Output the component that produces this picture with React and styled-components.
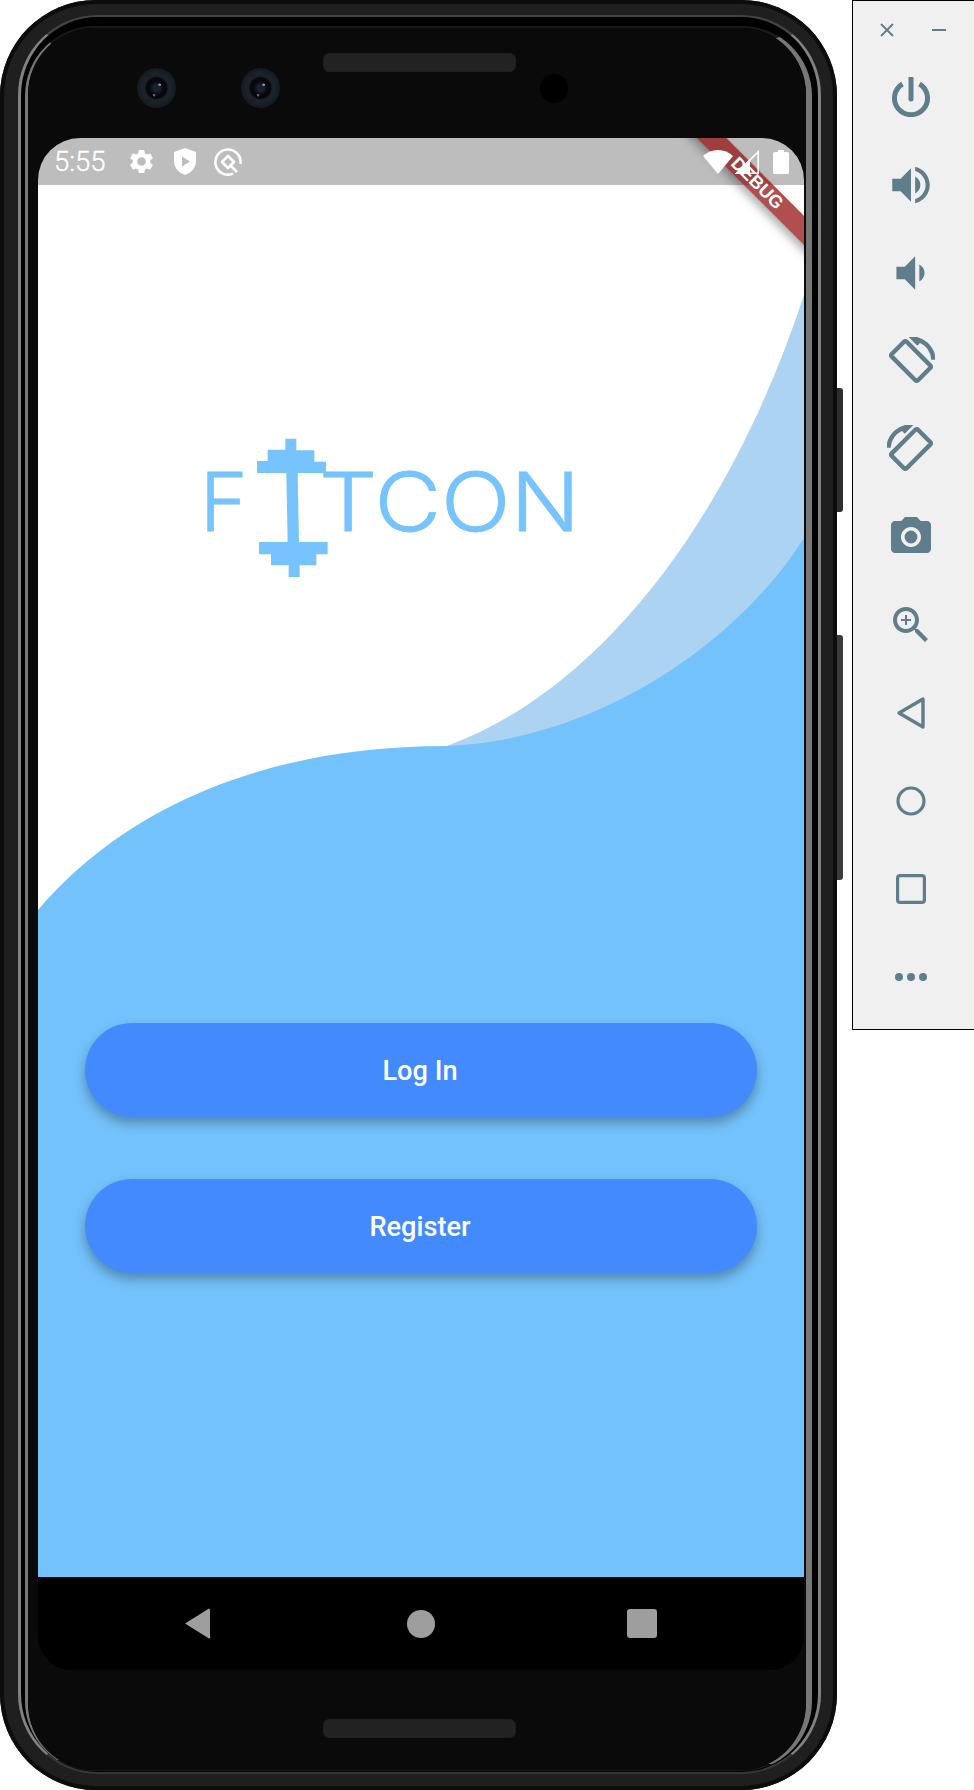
import styled, { createGlobalStyle } from "styled-components";

const GlobalStyle = createGlobalStyle`
  * { box-sizing: border-box; }
  html, body { margin: 0; padding: 0; background: #fff; }
  body { font-family: "Roboto", "Liberation Sans", sans-serif; overflow: hidden; }
`;

const TOOL_COLOR = "#607d8b";

export default function App() {
  return (
    <Page>
      <GlobalStyle />
      <Shell>
        <OuterRing>
          <InnerRing>
            <Bezel>
              <TopFixtures>
                <Speaker $top={25} />
                <CameraRow>
                  <Lens />
                  <Lens />
                  <Sensor />
                </CameraRow>
              </TopFixtures>
              <Screen>
                <StatusBar>
                  <Time>5:55</Time>
                  <GearIcon />
                  <ShieldIcon />
                  <QIcon />
                  <StatusRight>
                    <WifiIcon />
                    <SignalIcon />
                    <BatteryIcon />
                  </StatusRight>
                </StatusBar>
                <Content>
                  <WaveArt viewBox="0 0 766 1392" preserveAspectRatio="none">
                    <path d="M409 561 C562 505 692 335 766 110 V561 Z" fill="#add3f3" />
                    <path d="M0 725 C72 640 202 561 409 561 C562 555 702 455 766 353 V1392 H0 Z" fill="#74c2fb" />
                  </WaveArt>
                  <Logo>
                    <LogoLetter>F</LogoLetter>
                    <Barbell />
                    <LogoWord>TCON</LogoWord>
                  </Logo>
                  <Buttons>
                    <PillButton>Log In</PillButton>
                    <PillButton>Register</PillButton>
                  </Buttons>
                </Content>
                <NavBar>
                  <svg width="28" height="31" viewBox="0 0 28 31">
                    <path d="M26 1.5 V29.5 L27 30 L25 30.5 L1 15.5 L25 .5 Z" fill="#9e9e9e" />
                  </svg>
                  <NavCircle />
                  <NavSquare />
                </NavBar>
                <DebugBanner>DEBUG</DebugBanner>
              </Screen>
              <BottomFixtures>
                <Speaker />
              </BottomFixtures>
            </Bezel>
          </InnerRing>
        </OuterRing>
      </Shell>
      <SideKeys>
        <SideKey $height={124} $top={388} $tone="#2e2e2e" />
        <SideKey $height={245} $top={123} $tone="#3a3a3a" />
      </SideKeys>
      <Toolbar>
        <WindowRow>
          <svg width="16" height="16" viewBox="0 0 16 16">
            <path d="M2 2 L14 14 M14 2 L2 14" stroke={TOOL_COLOR} strokeWidth="1.8" />
          </svg>
          <MinusBar />
        </WindowRow>
        <ToolCell>
          <svg width="40" height="40" viewBox="0 0 40 40" fill="none" stroke={TOOL_COLOR}>
            <path d="M11.5 7 A16.5 16.5 0 1 0 28.5 7" strokeWidth="5" />
            <path d="M20 1 V22" strokeWidth="5" strokeLinecap="round" />
          </svg>
        </ToolCell>
        <ToolCell>
          <MaterialIcon size={50} d="M3 9v6h4l5 5V4L7 9H3zm13.5 3c0-1.77-1.02-3.29-2.5-4.03v8.05c1.48-.73 2.5-2.25 2.5-4.02zM14 3.23v2.06c2.89.86 5 3.54 5 6.71s-2.11 5.85-5 6.71v2.06c4.01-.91 7-4.49 7-8.77s-2.99-7.86-7-8.77z" />
        </ToolCell>
        <ToolCell>
          <MaterialIcon size={50} d="M18.5 12c0-1.77-1.02-3.29-2.5-4.03v8.05c1.48-.73 2.5-2.25 2.5-4.02zM5 9v6h4l5 5V4L9 9H5z" />
        </ToolCell>
        <ToolCell>
          <MaterialIcon size={48} d={ROTATE_PATH} bold />
        </ToolCell>
        <ToolCell>
          <Mirrored>
            <MaterialIcon size={48} d={ROTATE_PATH} bold />
          </Mirrored>
        </ToolCell>
        <ToolCell>
          <MaterialIcon size={48} d="M9 2L7.17 4H4c-1.1 0-2 .9-2 2v12c0 1.1.9 2 2 2h16c1.1 0 2-.9 2-2V6c0-1.1-.9-2-2-2h-3.17L15 2H9zm3 15c-2.76 0-5-2.24-5-5s2.24-5 5-5 5 2.24 5 5-2.24 5-5 5zM12 15.2a3.2 3.2 0 1 0 0-6.4 3.2 3.2 0 0 0 0 6.4z" />
        </ToolCell>
        <ToolCell>
          <MaterialIcon size={48} d="M15.5 14h-.79l-.28-.27C15.41 12.59 16 11.11 16 9.5 16 5.91 13.09 3 9.5 3S3 5.91 3 9.5 5.91 16 9.5 16c1.61 0 3.09-.59 4.23-1.57l.27.28v.79l5 4.99L20.49 19l-4.99-5zm-6 0C7.01 14 5 11.99 5 9.5S7.01 5 9.5 5 14 7.01 14 9.5 11.99 14 9.5 14zM12 10h-2v2H9v-2H7V9h2V7h1v2h2v1z" />
        </ToolCell>
        <ToolCell>
          <svg width="30" height="34" viewBox="0 0 30 34" fill="none">
            <path d="M27 3 V31 L3 17 Z" stroke={TOOL_COLOR} strokeWidth="3.4" strokeLinejoin="round" />
          </svg>
        </ToolCell>
        <ToolCell>
          <svg width="30" height="30" viewBox="0 0 30 30" fill="none">
            <circle cx="15" cy="15" r="13" stroke={TOOL_COLOR} strokeWidth="3.2" />
          </svg>
        </ToolCell>
        <ToolCell>
          <svg width="30" height="30" viewBox="0 0 30 30" fill="none">
            <rect x="1.6" y="1.6" width="26.8" height="26.8" rx="2.5" stroke={TOOL_COLOR} strokeWidth="3.2" />
          </svg>
        </ToolCell>
        <ToolCell>
          <svg width="34" height="10" viewBox="0 0 34 10" fill={TOOL_COLOR}>
            <circle cx="5" cy="5" r="4" />
            <circle cx="17" cy="5" r="4" />
            <circle cx="29" cy="5" r="4" />
          </svg>
        </ToolCell>
      </Toolbar>
    </Page>
  );
}

const ROTATE_PATH =
  "M16.48 2.52c3.27 1.55 5.61 4.72 5.97 8.48h1.5C23.44 4.84 18.29 0 12 0l-.66.03 3.81 3.81 1.33-1.32zm-6.25-.77c-.59-.59-1.54-.59-2.12 0L1.75 8.11c-.59.59-.59 1.54 0 2.12l12.02 12.02c.59.59 1.54.59 2.12 0l6.36-6.36c.59-.59.59-1.54 0-2.12L10.23 1.75zm4.6 19.44L2.81 9.17l6.36-6.36 12.02 12.02-6.36 6.36z";

function MaterialIcon({ d, size, bold }) {
  return (
    <svg width={size} height={size} viewBox="0 0 24 24" fill={TOOL_COLOR} stroke={bold ? TOOL_COLOR : "none"} strokeWidth={bold ? 0.7 : 0}>
      <path d={d} />
    </svg>
  );
}

function GearIcon() {
  return (
    <GearSvg width="29" height="29" viewBox="0 0 24 24" fill="#fff">
      <path d="M19.14 12.94c.04-.3.06-.61.06-.94 0-.32-.02-.64-.07-.94l2.03-1.58c.18-.14.23-.41.12-.61l-1.92-3.32c-.12-.22-.37-.29-.59-.22l-2.39.96c-.5-.38-1.03-.7-1.62-.94l-.36-2.54c-.04-.24-.24-.41-.48-.41h-3.84c-.24 0-.43.17-.47.41l-.36 2.54c-.59.24-1.13.57-1.62.94l-2.39-.96c-.22-.08-.47 0-.59.22L2.74 8.87c-.12.21-.08.47.12.61l2.03 1.58c-.05.3-.09.63-.09.94s.02.64.07.94l-2.03 1.58c-.18.14-.23.41-.12.61l1.92 3.32c.12.22.37.29.59.22l2.39-.96c.5.38 1.03.7 1.62.94l.36 2.54c.05.24.24.41.48.41h3.84c.24 0 .44-.17.47-.41l.36-2.54c.59-.24 1.13-.56 1.62-.94l2.39.96c.22.08.47 0 .59-.22l1.92-3.32c.12-.22.07-.47-.12-.61l-2.01-1.58zM12 15.6c-1.98 0-3.6-1.62-3.6-3.6s1.62-3.6 3.6-3.6 3.6 1.62 3.6 3.6-1.62 3.6-3.6 3.6z" />
    </GearSvg>
  );
}

function ShieldIcon() {
  return (
    <ShieldSvg width="22" height="27" viewBox="0 0 22 27" fill="#fff">
      <path fillRule="evenodd" d="M11 0 L22 4 V13 C22 20 17 25 11 27 C5 25 0 20 0 13 V4 Z M8 8.5 V18.5 L16 13.5 Z" />
    </ShieldSvg>
  );
}

function QIcon() {
  return (
    <QSvg width="28" height="28" viewBox="0 0 28 28" fill="none" stroke="#fff" strokeWidth="2.6">
      <path d="M19 25.6 A12.6 12.6 0 1 1 26.4 16" />
      <path d="M14 8 L20 14 L14 20 L8 14 Z" strokeLinejoin="round" />
      <path d="M16 17 L23 24" />
    </QSvg>
  );
}

function WifiIcon() {
  return (
    <svg width="30" height="24" viewBox="0 0 30 24" fill="#fff">
      <path d="M0 6 C8 -2 22 -2 30 6 L15 24 Z" />
    </svg>
  );
}

function SignalIcon() {
  return (
    <svg width="24" height="24" viewBox="0 0 24 24" fill="none">
      <path d="M23.2 1.8 V23.2 H1.8 Z" stroke="#fff" strokeWidth="1.6" />
      <path d="M15 9 V24 H0 Z" fill="#fff" />
    </svg>
  );
}

function BatteryIcon() {
  return (
    <svg width="16" height="24" viewBox="0 0 16 24" fill="#fff">
      <path d="M5 0 H11 V2 H14.5 A1.5 1.5 0 0 1 16 3.5 V22.5 A1.5 1.5 0 0 1 14.5 24 H1.5 A1.5 1.5 0 0 1 0 22.5 V3.5 A1.5 1.5 0 0 1 1.5 2 H5 Z" />
    </svg>
  );
}

function Barbell() {
  return (
    <BarbellSvg width="72" height="139" viewBox="0 0 216 417" fill="#76c3fd">
      <path d="M85 2 H118 V37 H172 V71 H207 V105 L122 105 L126 312 H212 V349 H178 V382 H128 V417 H95 V382 H42 V349 H6 V312 H92 L88 105 H0 V69 H32 V35 H85 Z" />
    </BarbellSvg>
  );
}

const Page = styled.div`
  display: flex;
  align-items: flex-start;
  width: 974px;
  height: 1790px;
  background: #fff;
`;

const Shell = styled.div`
  width: 837px;
  height: 1790px;
  flex-shrink: 0;
  display: flex;
  padding: 15px 16px 16px 18px;
  background: #1f1f1f;
  border-radius: 96px;
  box-shadow: inset 0 0 0 4px #0c0c0c;
`;

const OuterRing = styled.div`
  flex: 1;
  display: flex;
  padding: 9px 6px 1px 4px;
  background: #000;
  border: 3px solid #828282;
  border-top: 2px solid #444;
  border-bottom: 2px solid #363636;
  border-radius: 80px;
`;

const InnerRing = styled.div`
  flex: 1;
  display: flex;
  border-style: solid;
  border-width: 2px 6px 1px 3px;
  border-color: #1a1a1a #777 #1a1a1a #777;
  border-radius: 70px;
`;

const Bezel = styled.div`
  flex: 1;
  display: flex;
  flex-direction: column;
  padding: 0 2px 0 10px;
  background: #0a0a0a;
  border-radius: 66px;
`;

const TopFixtures = styled.div`
  height: 110px;
  flex-shrink: 0;
  overflow: hidden;
`;

const BottomFixtures = styled.div`
  flex: 1;
  padding-top: 49px;
`;

const Speaker = styled.div`
  width: 193px;
  height: 19px;
  margin: ${(p) => p.$top || 0}px 0 0 285px;
  border: 1px solid #1e1e1e;
  border-radius: 6px;
  background-color: #101010;
  background-image: radial-gradient(#2c2c2c 0.6px, transparent 0.9px);
  background-size: 2px 2px;
`;

const CameraRow = styled.div`
  display: flex;
  align-items: center;
  margin-top: -4px;
  padding-left: 99px;
`;

const Lens = styled.div`
  width: 39px;
  height: 40px;
  margin-right: 65px;
  border-radius: 50%;
  background:
    radial-gradient(circle at 58% 42%, #8a90a8 0 1px, transparent 1.6px),
    radial-gradient(circle at 44% 68%, #6a5a50 0 1px, transparent 1.6px),
    radial-gradient(circle at 50% 50%, #1a2230 0 3px, #05070a 7px 10px, #1b2229 12px 14px, #141a20 20px);
`;

const Sensor = styled.div`
  width: 28px;
  height: 29px;
  margin-left: 195px;
  border-radius: 50%;
  background: #000;
`;

const Screen = styled.div`
  position: relative;
  height: 1532px;
  flex-shrink: 0;
  display: flex;
  flex-direction: column;
  overflow: hidden;
  border-radius: 42px 42px 34px 34px;
  background: #000;
`;

const StatusBar = styled.div`
  height: 47px;
  flex-shrink: 0;
  display: flex;
  align-items: center;
  padding: 0 15px 0 16px;
  background: #bdbdbd;
`;

const Time = styled.span`
  width: 52px;
  color: #fff;
  font-size: 27.5px;
  font-weight: 300;
  line-height: 47px;
  white-space: nowrap;
  -webkit-text-stroke: 0.3px #fff;
`;

const GearSvg = styled.svg`
  margin-left: 21px;
`;

const ShieldSvg = styled.svg`
  margin-left: 18px;
`;

const QSvg = styled.svg`
  margin-left: 18px;
`;

const StatusRight = styled.div`
  position: relative;
  z-index: 2;
  margin-left: auto;
  display: flex;
  align-items: center;
  gap: 2px;
  svg:last-child {
    margin-left: 12px;
  }
`;

const Content = styled.div`
  flex: 1;
  position: relative;
  display: flex;
  flex-direction: column;
  background: #fff;
`;

const WaveArt = styled.svg`
  position: absolute;
  inset: 0;
  width: 100%;
  height: 100%;
`;

const Logo = styled.div`
  position: relative;
  display: flex;
  align-items: flex-start;
  height: 139px;
  margin-top: 253px;
  padding-left: 162px;
  color: #76c3fd;
`;

const LogoLetter = styled.span`
  width: 47px;
  font-family: "Inter", "Liberation Sans", sans-serif;
  font-size: 81px;
  font-weight: 300;
  line-height: 98px;
  margin-top: 15px;
  -webkit-text-stroke: 0.8px #76c3fd;
`;

const LogoWord = styled(LogoLetter)`
  width: auto;
  transform: scaleX(1.13);
  transform-origin: left center;
`;

const BarbellSvg = styled.svg`
  margin: 0 -10px 0 10px;
  flex-shrink: 0;
`;

const Buttons = styled.div`
  position: relative;
  display: flex;
  flex-direction: column;
  gap: 62px;
  margin-top: 446px;
  padding: 0 47px;
`;

const PillButton = styled.button`
  height: 94px;
  padding: 2px 2px 0 0;
  border: 0;
  border-radius: 47px;
  background: #448aff;
  color: #fff;
  font-family: "Roboto", "Liberation Sans", sans-serif;
  font-size: 27.2px;
  font-weight: 500;
  box-shadow: 0 6px 12px rgba(0, 0, 0, 0.3);
`;

const NavBar = styled.div`
  height: 93px;
  flex-shrink: 0;
  display: flex;
  align-items: center;
  padding-left: 146px;
  background: #000;
`;

const NavCircle = styled.div`
  width: 28px;
  height: 28px;
  margin: 0 192px 0 195px;
  border-radius: 50%;
  background: #9e9e9e;
`;

const NavSquare = styled.div`
  width: 30px;
  height: 29px;
  border-radius: 3px;
  background: #9e9e9e;
`;

const DebugBanner = styled.div`
  position: absolute;
  z-index: 1;
  top: 35px;
  left: 619px;
  width: 200px;
  height: 21px;
  transform: rotate(45deg);
  background: rgba(150, 20, 20, 0.75);
  box-shadow: 0 5px 8px rgba(0, 0, 0, 0.3);
  color: #fff;
  font-family: "Liberation Sans", sans-serif;
  font-size: 18px;
  font-weight: 700;
  line-height: 21px;
  text-align: center;
`;

const SideKeys = styled.div`
  width: 6px;
  flex-shrink: 0;
  display: flex;
  flex-direction: column;
`;

const SideKey = styled.div`
  height: ${(p) => p.$height}px;
  margin-top: ${(p) => p.$top}px;
  border-radius: 0 3px 3px 0;
  background: ${(p) => p.$tone};
`;

const Toolbar = styled.div`
  width: 122px;
  height: 1030px;
  margin-left: 9px;
  padding-right: 5px;
  flex-shrink: 0;
  display: flex;
  flex-direction: column;
  background: #f0f0f0;
  border: 1px solid #000;
  border-right: 0;
`;

const WindowRow = styled.div`
  height: 52px;
  display: flex;
  align-items: flex-start;
  justify-content: space-between;
  padding: 21px 23px 0 26px;
`;

const MinusBar = styled.div`
  width: 14px;
  height: 2px;
  margin-top: 7px;
  background: ${TOOL_COLOR};
`;

const ToolCell = styled.div`
  height: 88px;
  flex-shrink: 0;
  display: flex;
  align-items: center;
  justify-content: center;
`;

const Mirrored = styled.div`
  display: flex;
  transform: scaleX(-1);
`;
